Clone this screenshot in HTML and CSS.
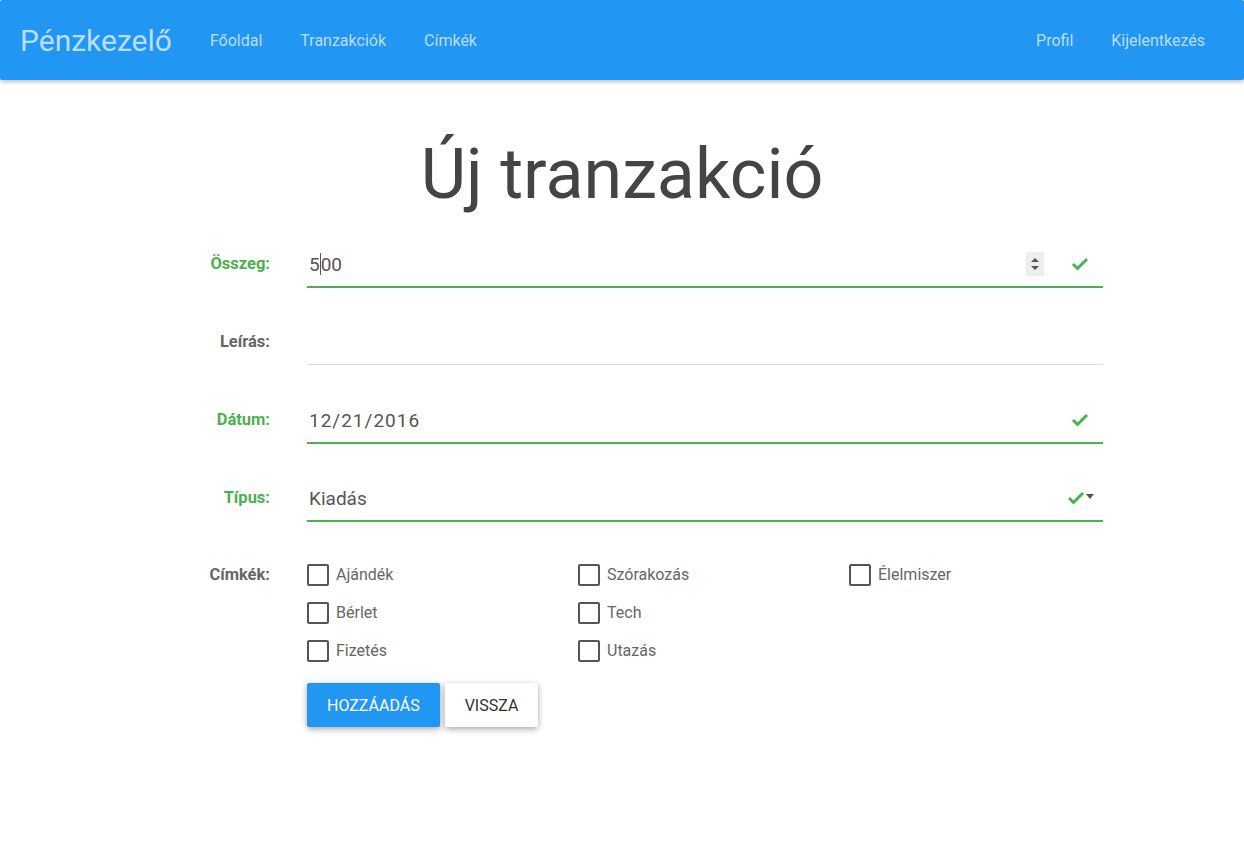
FILE: index.html
```html
<!DOCTYPE html>
<html lang="hu">
<head>
    <meta charset="UTF-8">
    <title>Pénzkezelő - Új tranzakció</title>
    <link rel="stylesheet" href="styles.css">
</head>
<body>
    <nav class="navbar">
        <a class="brand" href="#">Pénzkezelő</a>
        <div class="nav-links">
            <a href="#">Főoldal</a>
            <a href="#">Tranzakciók</a>
            <a href="#">Címkék</a>
        </div>
        <div class="nav-links right">
            <a href="#">Profil</a>
            <a href="#">Kijelentkezés</a>
        </div>
    </nav>

    <main class="page">
        <h1 class="title">Új tranzakció</h1>

        <form class="form">
            <label class="form-label valid">Összeg:</label>
            <div class="field valid">
                <span class="value">5<span class="caret"></span>00</span>
                <span class="spinner">
                    <svg width="18" height="24" viewBox="0 0 18 24"><path d="M5 10 L9 6 L13 10 Z M5 14 L13 14 L9 18 Z" fill="#555"/></svg>
                </span>
                <svg class="check" width="18" height="14" viewBox="0 0 18 14"><path d="M2 7 L6.5 11.5 L16 2" fill="none" stroke="#4caf50" stroke-width="3"/></svg>
            </div>

            <label class="form-label">Leírás:</label>
            <div class="field">
                <span class="value"></span>
            </div>

            <label class="form-label valid">Dátum:</label>
            <div class="field valid">
                <span class="value date">12/21/2016</span>
                <svg class="check" width="18" height="14" viewBox="0 0 18 14"><path d="M2 7 L6.5 11.5 L16 2" fill="none" stroke="#4caf50" stroke-width="3"/></svg>
            </div>

            <label class="form-label valid">Típus:</label>
            <div class="field valid">
                <span class="value">Kiadás</span>
                <svg class="check tight" width="18" height="14" viewBox="0 0 18 14"><path d="M2 7 L6.5 11.5 L16 2" fill="none" stroke="#4caf50" stroke-width="3"/></svg>
                <svg class="caret-down" width="10" height="6" viewBox="0 0 10 6"><path d="M1 0 L9 0 L5 5 Z" fill="#555"/></svg>
            </div>

            <label class="form-label tags-label">Címkék:</label>
            <div class="tags">
                <label class="tag"><span class="box"></span>Ajándék</label>
                <label class="tag"><span class="box"></span>Szórakozás</label>
                <label class="tag"><span class="box"></span>Élelmiszer</label>
                <label class="tag"><span class="box"></span>Bérlet</label>
                <label class="tag"><span class="box"></span>Tech</label>
                <span></span>
                <label class="tag"><span class="box"></span>Fizetés</label>
                <label class="tag"><span class="box"></span>Utazás</label>
            </div>

            <span></span>
            <div class="actions">
                <button type="button" class="btn primary">Hozzáadás</button>
                <button type="button" class="btn">Vissza</button>
            </div>
        </form>
    </main>
</body>
</html>
```

FILE: styles.css
```css
body {
    margin: 0;
    font-family: Roboto, "Noto Sans", Arial, sans-serif;
    color: #555;
    background-color: #fff;
}

a {
    text-decoration: none;
}

.navbar {
    display: flex;
    align-items: center;
    height: 80px;
    padding: 0 20px;
    background-color: #2196f3;
    border-radius: 2px;
    box-shadow: 0 2px 4px rgba(0, 0, 0, 0.25);
}

.brand {
    font-size: 30px;
    color: #bbdefb;
    margin-right: 19px;
}

.nav-links {
    display: flex;
}

.nav-links a {
    padding: 0 19px;
    font-size: 16px;
    color: #bbdefb;
}

.nav-links.right {
    margin-left: auto;
    margin-right: 0;
}

.title {
    margin: 53px 0 27px;
    text-align: center;
    font-size: 70px;
    font-weight: 400;
    color: #444;
}

.form {
    display: grid;
    grid-template-columns: 270px 796px;
    column-gap: 37px;
    row-gap: 32px;
    align-items: start;
    padding-bottom: 40px;
}

.form-label {
    text-align: right;
    font-size: 16.5px;
    font-weight: 700;
    color: #666;
    line-height: 44px;
}

.form-label.valid {
    color: #4caf50;
}

.field {
    display: flex;
    align-items: center;
    height: 44px;
    border-bottom: 1px solid #ddd;
    margin-bottom: 1px;
}

.field.valid {
    border-bottom: 2px solid #4caf50;
    margin-bottom: 0;
}

.value {
    flex: 1;
    padding-left: 2px;
    font-size: 19px;
    color: #555;
}

.value.date {
    letter-spacing: 1px;
}

.caret {
    display: inline-block;
    width: 1px;
    height: 22px;
    margin-bottom: -4px;
    background-color: #555;
}

.spinner {
    display: flex;
    width: 18px;
    height: 24px;
    background-color: #eee;
    margin-right: 27px;
}

.check {
    margin-right: 14px;
}

.check.tight {
    margin-right: 0;
}

.caret-down {
    margin-right: 8px;
    margin-top: -2px;
}

.tags-label {
    line-height: 20px;
    margin-top: 11px;
}

.tags {
    display: grid;
    grid-template-columns: repeat(3, 271px);
    row-gap: 16px;
    margin-top: 10px;
}

.tag {
    display: flex;
    align-items: center;
    font-size: 16px;
    color: #666;
    line-height: 22px;
}

.tag .box {
    width: 22px;
    height: 22px;
    border: 2px solid #555;
    border-radius: 2px;
    margin-right: 7px;
    box-sizing: border-box;
}

.actions {
    display: flex;
    gap: 5px;
    margin-top: -11px;
}

.btn {
    height: 44px;
    padding: 0 20px;
    border: none;
    border-radius: 2px;
    background-color: #fff;
    color: #333;
    font-family: inherit;
    font-size: 16px;
    text-transform: uppercase;
    box-shadow: 0 2px 6px rgba(0, 0, 0, 0.35);
    cursor: pointer;
}

.btn.primary {
    background-color: #2196f3;
    color: #fff;
}
```
